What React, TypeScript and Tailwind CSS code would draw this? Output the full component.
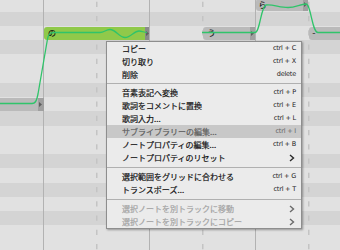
import React from "react";

const rows = ["w", "b", "w", "b", "w", "w", "b", "w", "b", "w", "w", "b", "w", "b", "w", "b", "w", "w"];
const ROW_H = 14.25;
const ROW0 = -2.75;

type Item =
  | { sep: true; h: number }
  | { sep?: false; t: string; k?: string; sub?: boolean; hl?: boolean; dis?: boolean };

const items: Item[] = [
  { t: "コピー", k: "ctrl + C" },
  { t: "切り取り", k: "ctrl + X" },
  { t: "削除", k: "delete" },
  { sep: true, h: 5 },
  { t: "音素表記へ変換", k: "ctrl + P" },
  { t: "歌詞をコメントに置換", k: "ctrl + E" },
  { t: "歌詞入力...", k: "ctrl + L" },
  { t: "サブライブラリーの編集...", k: "ctrl + I", hl: true },
  { t: "ノートプロパティの編集...", k: "ctrl + B" },
  { t: "ノートプロパティのリセット", sub: true },
  { sep: true, h: 6 },
  { t: "選択範囲をグリッドに合わせる", k: "ctrl + G" },
  { t: "トランスポーズ...", k: "ctrl + T" },
  { sep: true, h: 6 },
  { t: "選択ノートを別トラックに移動", sub: true, dis: true },
  { t: "選択ノートを別トラックにコピー", sub: true, dis: true },
];

function Tri({ color }: { color: string }) {
  return (
    <svg width="3" height="5" viewBox="0 0 3 5" className="block">
      <polygon points="0,0 3,2.5 0,5" fill={color} />
    </svg>
  );
}

function Note({
  left,
  top,
  width,
  body,
  cap,
  capW,
  lyric,
  textX,
  rounded,
}: {
  left: number;
  top: number;
  width: number;
  body: string;
  cap: string;
  capW: number;
  lyric: string;
  textX: number;
  rounded?: boolean;
}) {
  return (
    <div
      className={`absolute flex h-[12.5px] overflow-hidden ${rounded ? "rounded-l-[3px]" : ""}`}
      style={{ left, top, width }}
    >
      <div
        className="flex-1 flex items-center text-[8px] leading-none text-[#111111] [-webkit-text-stroke:0.2px_#111111]"
        style={{ background: body, paddingLeft: textX, fontFamily: '"Noto Sans CJK JP", sans-serif' }}
      >
        {lyric}
      </div>
      <div className="flex items-center justify-center shrink-0" style={{ width: capW, background: cap }}>
        <Tri color="#5e5e5e" />
      </div>
    </div>
  );
}

export default function App() {
  const gridSolid = [43.5, 149.5, 255.5];
  const gridDash = [96.75, 202.75, 308.75];
  return (
    <div
      className="relative w-[340px] h-[250px] overflow-hidden bg-[#e1e1e1]"
      style={{ fontFamily: '"Noto Sans CJK JP", sans-serif' }}
    >
      <div className="flex flex-col mt-[-2.75px]">
        {rows.map((r, i) => (
          <div key={i} className={`h-[14.25px] shrink-0 ${r === "b" ? "bg-[#d4d4d4]" : "bg-[#e1e1e1]"}`} />
        ))}
      </div>

      <svg className="absolute inset-0" width="340" height="250">
        {gridSolid.map((x) => (
          <line key={x} x1={x} x2={x} y1={0} y2={250} stroke="#b2b2b2" strokeWidth="1" />
        ))}
        {gridDash.map((x) =>
          rows.map((_, i) => {
            const t = ROW0 + i * ROW_H;
            return (
              <line key={`${x}-${i}`} x1={x} x2={x} y1={t + 4.5} y2={t + 9.8} stroke="#c4c4c4" strokeWidth="1.5" />
            );
          })
        )}
      </svg>

      <Note left={-4} top={98.25} width={47.5} body="#bababa" cap="#a0a0a0" capW={6} lyric="" textX={4} />
      <Note left={43.5} top={27} width={105.5} body="#90c94a" cap="#8a8a8a" capW={4} lyric="の" textX={4.5} rounded />
      <Note left={202.5} top={27} width={52.5} body="#bababa" cap="#a0a0a0" capW={5} lyric="う" textX={5} rounded />
      <Note left={255.5} top={-1.5} width={52.5} body="#bababa" cap="#a0a0a0" capW={5} lyric="ら" textX={3} rounded />
      <Note left={308.5} top={27} width={40} body="#bababa" cap="#a0a0a0" capW={5} lyric="-" textX={4} rounded />

      <svg className="absolute inset-0" width="340" height="250" fill="none">
        <path
          d="M0,103.5 L32,103.5 C36,103.5 37,99 38,94 L47.5,39 C48.5,34 50,32.5 54,32.5 L100,32.5 C104,32.5 106,29.5 110,29.5 C116,29.5 119,37.5 125,37.5 C131,37.5 134,31 139,31 C142,31 144,32.5 147,32.5"
          stroke="#2fc46a"
          strokeWidth="1.3"
        />
        <path
          d="M202,32.5 L255,32.5 C260,32.5 261,6 266,5 C272,4 280,7.5 288,7.5 C296,7.5 300,4 306,4 C311,4 312,32.5 318,32.5 L340,32.5"
          stroke="#2fc46a"
          strokeWidth="1.3"
        />
      </svg>

      <div className="absolute left-[106px] top-[41px] w-[196px] h-[188px] bg-[#ebebeb] border border-[#8e8e8e] shadow-[1px_1px_2px_rgba(0,0,0,0.35)] flex flex-col">
        {items.map((it, i) => {
          if (it.sep) {
            return (
              <div key={i} className="flex flex-col justify-center shrink-0" style={{ height: it.h }}>
                <div className="h-px bg-[#b0b0b0]" />
              </div>
            );
          }
          const tc = it.dis ? "#a3a3a3" : it.hl ? "#5c5c5c" : "#111111";
          return (
            <div
              key={i}
              className={`h-[13px] shrink-0 flex items-center pl-[15px] pr-[5px] ${it.hl ? "bg-[#c8c8c8]" : ""}`}
            >
              <span
                className="flex-1 text-[8px] leading-none whitespace-nowrap"
                style={{ color: tc, WebkitTextStroke: `0.2px ${tc}` }}
              >
                {it.t}
              </span>
              {it.k ? (
                <span
                  className={`text-[6.5px] leading-none ${it.hl ? "text-[#666666]" : "text-[#222222]"}`}
                  style={{ fontFamily: '"DejaVu Sans", sans-serif', letterSpacing: "-0.2px" }}
                >
                  {it.k}
                </span>
              ) : null}
              {it.sub ? (
                <svg width="6" height="8" viewBox="0 0 6 8" className="mr-[1px]">
                  <polyline points="1,1 4.5,4 1,7" fill="none" stroke={it.dis ? "#6a6a6a" : "#2a2a2a"} strokeWidth="1.4" />
                </svg>
              ) : null}
            </div>
          );
        })}
      </div>
    </div>
  );
}
